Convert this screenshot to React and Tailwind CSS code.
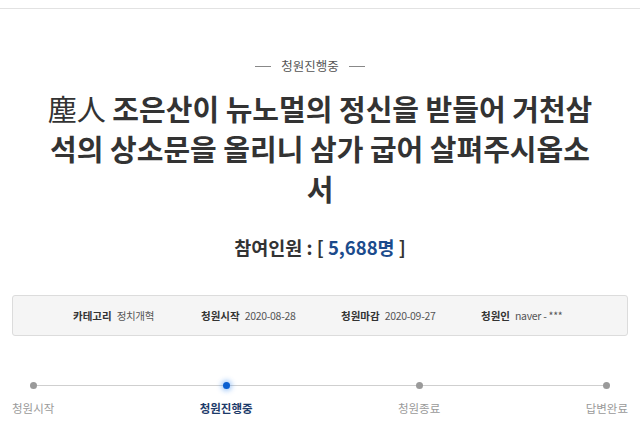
import { useState } from 'react';

const FONT = { fontFamily: '"Noto Sans CJK KR", "Noto Sans", sans-serif' };

const steps = [
  { label: '청원시작', active: false },
  { label: '청원진행중', active: true },
  { label: '청원종료', active: false },
  { label: '답변완료', active: false },
];

const info = [
  { key: '카테고리', value: '정치개혁', w: 'w-[128px]' },
  { key: '청원시작', value: '2020-08-28', w: 'w-[140px]' },
  { key: '청원마감', value: '2020-09-27', w: 'w-[140px]' },
  { key: '청원인', value: 'naver - ***', w: '' },
];

export default function App() {
  const [count] = useState('5,688');

  return (
    <div className="w-[640px] h-[447px] bg-white overflow-hidden" style={FONT}>
      <div className="mt-[8px] border-t border-[#e2e2e2]" />

      {/* status tag */}
      <div className="flex items-center justify-center gap-[10px] mt-[48px] pr-[20px] text-[12.5px] leading-[18px] text-[#555]">
        <span className="w-[16px] h-px bg-[#888]" />
        <span>청원진행중</span>
        <span className="w-[16px] h-px bg-[#888]" />
      </div>

      {/* title */}
      <h1 className="mx-auto mt-[13px] w-[552px] text-center text-[29px] leading-[40px] font-bold text-[#333] break-all">
        <span className="font-normal">塵人</span> 조은산이 뉴노멀의 정신을 받들어 거천삼석의 상소문을 올리니 삼가 굽어 살펴주시옵소서
      </h1>

      {/* participants */}
      <div className="mt-[27px] text-center text-[18.5px] leading-[24px] font-bold text-[#333]">
        참여인원 : [ <span className="text-[#1b4b8c]">{count}명</span> ]
      </div>

      {/* info bar */}
      <div className="mx-[12px] mt-[36px] h-[41px] flex items-center pl-[60px] bg-[#f5f5f5] border border-[#dcdcdc] rounded-[3px] text-[10.5px]">
        {info.map((it) => (
          <div key={it.key} className={`flex items-center gap-[5px] ${it.w}`}>
            <span className="font-bold text-[#333]">{it.key}</span>
            <span className="text-[#555] tracking-[-0.3px]">{it.value}</span>
          </div>
        ))}
      </div>

      {/* progress */}
      <div className="relative mx-[12px] mt-[46px] flex justify-between">
        <div className="absolute left-[21px] right-[23px] top-[3px] h-px bg-[#cfcfcf]" />
        {steps.map((s) => (
          <div key={s.label} className="relative flex flex-col items-center">
            {s.active ? (
              <span className="w-[7px] h-[7px] rounded-full bg-[#0b5fd0] shadow-[0_0_5px_2px_rgba(60,140,240,0.45)]" />
            ) : (
              <span className="w-[7px] h-[7px] rounded-full bg-[#9a9a9a]" />
            )}
            <span
              className={`mt-[11px] text-[11.5px] leading-[16px] ${
                s.active ? 'font-bold text-[#1d3b6a]' : 'text-[#9a9a9a]'
              }`}
            >
              {s.label}
            </span>
          </div>
        ))}
      </div>
    </div>
  );
}
